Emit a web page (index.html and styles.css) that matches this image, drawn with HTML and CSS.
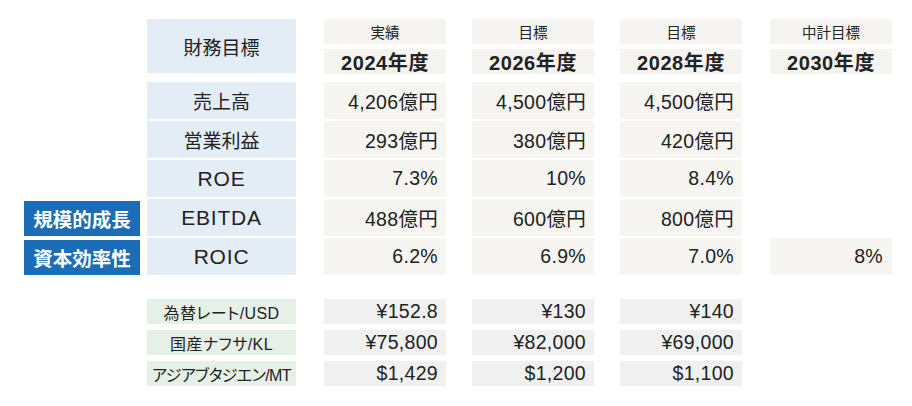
FILE: index.html
```html
<!DOCTYPE html>
<html lang="ja">
<head>
<meta charset="utf-8">
<title>財務目標</title>
<link rel="stylesheet" href="styles.css">
</head>
<body>
<div class="page">
  <div class="grid head">
    <div class="cell empty span2"></div>
    <div class="cell label title span2">財務目標</div>
    <div class="cell hcap">実績</div>
    <div class="cell hcap">目標</div>
    <div class="cell hcap">目標</div>
    <div class="cell hcap">中計目標</div>
    <div class="cell hyear">2024年度</div>
    <div class="cell hyear">2026年度</div>
    <div class="cell hyear">2028年度</div>
    <div class="cell hyear">2030年度</div>
  </div>

  <div class="grid body">
    <div class="cell empty"></div>
    <div class="cell label">売上高</div>
    <div class="cell val">4,206億円</div>
    <div class="cell val">4,500億円</div>
    <div class="cell val">4,500億円</div>
    <div class="cell empty"></div>

    <div class="cell empty"></div>
    <div class="cell label">営業利益</div>
    <div class="cell val">293億円</div>
    <div class="cell val">380億円</div>
    <div class="cell val">420億円</div>
    <div class="cell empty"></div>

    <div class="cell empty"></div>
    <div class="cell label latin">ROE</div>
    <div class="cell val">7.3%</div>
    <div class="cell val">10%</div>
    <div class="cell val">8.4%</div>
    <div class="cell empty"></div>

    <div class="cell tag">規模的成長</div>
    <div class="cell label latin">EBITDA</div>
    <div class="cell val">488億円</div>
    <div class="cell val">600億円</div>
    <div class="cell val">800億円</div>
    <div class="cell empty"></div>

    <div class="cell tag">資本効率性</div>
    <div class="cell label latin">ROIC</div>
    <div class="cell val">6.2%</div>
    <div class="cell val">6.9%</div>
    <div class="cell val">7.0%</div>
    <div class="cell val last">8%</div>
  </div>

  <div class="grid assume">
    <div class="cell empty"></div>
    <div class="cell alabel">為替レート/USD</div>
    <div class="cell aval">¥152.8</div>
    <div class="cell aval">¥130</div>
    <div class="cell aval">¥140</div>
    <div class="cell empty"></div>

    <div class="cell empty"></div>
    <div class="cell alabel">国産ナフサ/KL</div>
    <div class="cell aval">¥75,800</div>
    <div class="cell aval">¥82,000</div>
    <div class="cell aval">¥69,000</div>
    <div class="cell empty"></div>

    <div class="cell empty"></div>
    <div class="cell alabel tight">アジアブタジエン/MT</div>
    <div class="cell aval">$1,429</div>
    <div class="cell aval">$1,200</div>
    <div class="cell aval">$1,100</div>
    <div class="cell empty"></div>
  </div>
</div>
</body>
</html>
```

FILE: styles.css
```css
* { box-sizing: border-box; }

html, body {
  margin: 0;
  padding: 0;
  background: #ffffff;
}

body {
  font-family: "Liberation Sans", "Noto Sans CJK JP", sans-serif;
  color: #222222;
  width: 912px;
  height: 406px;
  overflow: hidden;
}

.page {
  padding: 19px 0 0 24px;
}

.grid {
  display: grid;
  grid-template-columns: 116px 156px 150px 148px 148px 150px;
}

.cell {
  display: flex;
  align-items: center;
  justify-self: end;
  width: 122px;
  white-space: nowrap;
}

.head {
  grid-template-rows: 25px 25px;
  row-gap: 5px;
}

.head .span2 { grid-row: span 2; }

.body {
  margin-top: 8px;
  grid-template-rows: repeat(5, 37px);
  row-gap: 2px;
}

.assume {
  margin-top: 24px;
  grid-template-rows: repeat(3, 25px);
  row-gap: 6px;
}

.empty { background: transparent; }

.label {
  width: 149px;
  justify-content: center;
  background: #e4ecf6;
  font-size: 19px;
}

.label.latin {
  font-size: 21px;
  letter-spacing: 0.8px;
}

.title {
  height: 54px;
  align-self: start;
}

.hcap {
  justify-content: center;
  background: #f5f4f0;
  font-size: 14.5px;
}

.hyear {
  justify-content: center;
  background: #f5f4f0;
  font-size: 20px;
  font-weight: bold;
  letter-spacing: 0.6px;
}

.val {
  justify-content: flex-end;
  padding-right: 8px;
  background: #f6f5f1;
  font-size: 19.5px;
  letter-spacing: 0.3px;
}

.val.last { padding-right: 9px; }

.tag {
  justify-self: start;
  align-self: end;
  width: 116px;
  height: 35px;
  justify-content: center;
  background: #1a6db6;
  color: #ffffff;
  font-size: 19.5px;
  font-weight: bold;
}

.alabel {
  width: 149px;
  justify-content: center;
  background: #e6f0e6;
  font-size: 16px;
  font-feature-settings: "palt";
  letter-spacing: 0.4px;
}

.alabel.tight {
  letter-spacing: -0.6px;
}

.aval {
  justify-content: flex-end;
  padding-right: 8px;
  background: #f0f0f0;
  font-size: 19.5px;
  letter-spacing: 0.3px;
}
```
